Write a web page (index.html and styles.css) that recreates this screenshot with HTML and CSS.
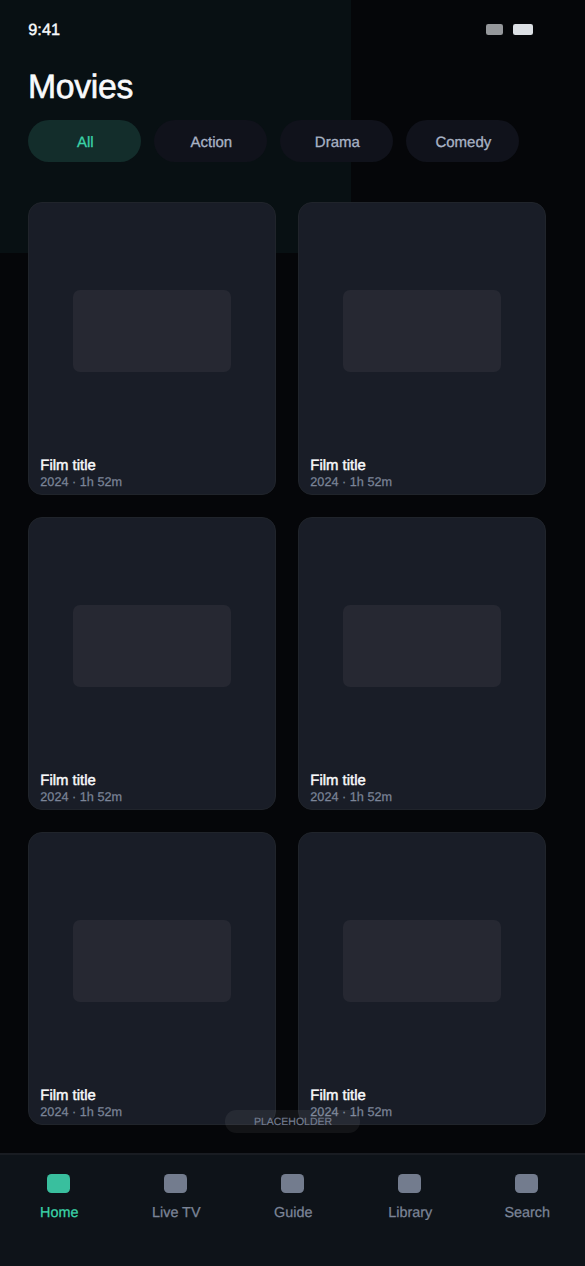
FILE: index.html
```html
<!DOCTYPE html>
<html lang="en">
<head>
<meta charset="utf-8">
<title>Movies</title>
<link rel="stylesheet" href="styles.css">
</head>
<body>
<div class="screen">
  <header class="status">
    <span class="time">9:41</span>
    <span class="indicators"><i class="signal"></i><i class="battery"></i></span>
  </header>
  <h1 class="title">Movies</h1>
  <nav class="filters">
    <span class="chip active">All</span>
    <span class="chip">Action</span>
    <span class="chip">Drama</span>
    <span class="chip">Comedy</span>
  </nav>
  <main class="grid">
    <article class="card"><div class="poster"></div><h2>Film title</h2><p>2024 · 1h 52m</p></article>
    <article class="card"><div class="poster"></div><h2>Film title</h2><p>2024 · 1h 52m</p></article>
    <article class="card"><div class="poster"></div><h2>Film title</h2><p>2024 · 1h 52m</p></article>
    <article class="card"><div class="poster"></div><h2>Film title</h2><p>2024 · 1h 52m</p></article>
    <article class="card"><div class="poster"></div><h2>Film title</h2><p>2024 · 1h 52m</p></article>
    <article class="card"><div class="poster"></div><h2>Film title</h2><p>2024 · 1h 52m</p></article>
  </main>
  <div class="badge">PLACEHOLDER</div>
  <footer class="tabs">
    <div class="tab active"><i></i><span>Home</span></div>
    <div class="tab"><i></i><span>Live TV</span></div>
    <div class="tab"><i></i><span>Guide</span></div>
    <div class="tab"><i></i><span>Library</span></div>
    <div class="tab"><i></i><span>Search</span></div>
  </footer>
</div>
</body>
</html>
```
FILE: styles.css
```css
* { box-sizing: border-box; }
body {
  margin: 0;
  font-family: "Liberation Sans", Arial, sans-serif;
  color: #f8fafc;
  text-rendering: geometricPrecision;
}
h1, h2, p { margin: 0; font-weight: 400; }
.screen {
  position: relative;
  display: flex;
  flex-direction: column;
  width: 585px;
  height: 1266px;
  overflow: hidden;
  background: linear-gradient(#081013, #081013) 0 0 / 351px 253.2px no-repeat, #050609;
}
.status {
  display: flex;
  justify-content: space-between;
  height: 60px;
  padding: 20px 52px 0 28.3px;
}
.time { font-size: 16.3px; line-height: 20px; -webkit-text-stroke: 0.4px; }
.indicators { display: flex; gap: 10px; padding-top: 4px; }
.indicators i { height: 11px; border-radius: 2.25px; }
.signal { width: 17px; background: #95979b; }
.battery { width: 20px; background: #dcdfe4; }
.title {
  height: 60px;
  padding-left: 28px;
  font-size: 33.75px;
  line-height: 54px;
  letter-spacing: -0.3px;
  -webkit-text-stroke: 0.6px;
}
.filters { display: flex; gap: 13.5px; height: 42px; padding-left: 28.1px; }
.chip {
  width: 112.5px;
  height: 42px;
  padding-left: 2px;
  border-radius: 21px;
  background: #10121b;
  color: #a9b3c5;
  font-size: 15px;
  line-height: 45px;
  text-align: center;
  -webkit-text-stroke: 0.3px;
}
.chip.active { background: #132d2b; color: #3bd3a8; }
.grid {
  display: grid;
  grid-template-columns: 248px 248px;
  grid-auto-rows: 293px;
  gap: 22px;
  padding: 40px 0 0 28.3px;
}
.card {
  display: flex;
  flex-direction: column;
  padding: 87px 0 0 11px;
  border: 1px solid #20242b;
  border-radius: 14px;
  background: #191d27;
}
.poster {
  width: 158px;
  height: 82px;
  margin: 0 0 85px 33px;
  border-radius: 7px;
  background: #262832;
}
.card h2 { font-size: 14.9px; line-height: 18px; -webkit-text-stroke: 0.45px; }
.card p { font-size: 12.7px; line-height: 15px; color: #7b8497; -webkit-text-stroke: 0.25px; }
.badge {
  position: absolute;
  left: 225px;
  top: 1110px;
  width: 135px;
  height: 22.5px;
  padding-left: 1px;
  border-radius: 11.25px;
  background: rgba(255, 255, 255, 0.06);
  color: #757e91;
  font-size: 10.5px;
  line-height: 24px;
  text-align: center;
  -webkit-text-stroke: 0.15px;
}
.tabs {
  display: grid;
  grid-template-columns: repeat(5, 117px);
  height: 113px;
  margin-top: auto;
  padding-top: 19px;
  border-top: 2px solid #191c22;
  background: #0e1319;
}
.tab {
  display: flex;
  flex-direction: column;
  align-items: center;
  gap: 11px;
  color: #7b8497;
  font-size: 14.4px;
  line-height: 19px;
  -webkit-text-stroke: 0.25px;
}
.tab span { padding-left: 1.5px; }
.tab i { width: 23px; height: 18.5px; border-radius: 4.5px; background: #737c8e; }
.tab.active { color: #3bd3a8; }
.tab.active i { background: #39bf9e; }
```
